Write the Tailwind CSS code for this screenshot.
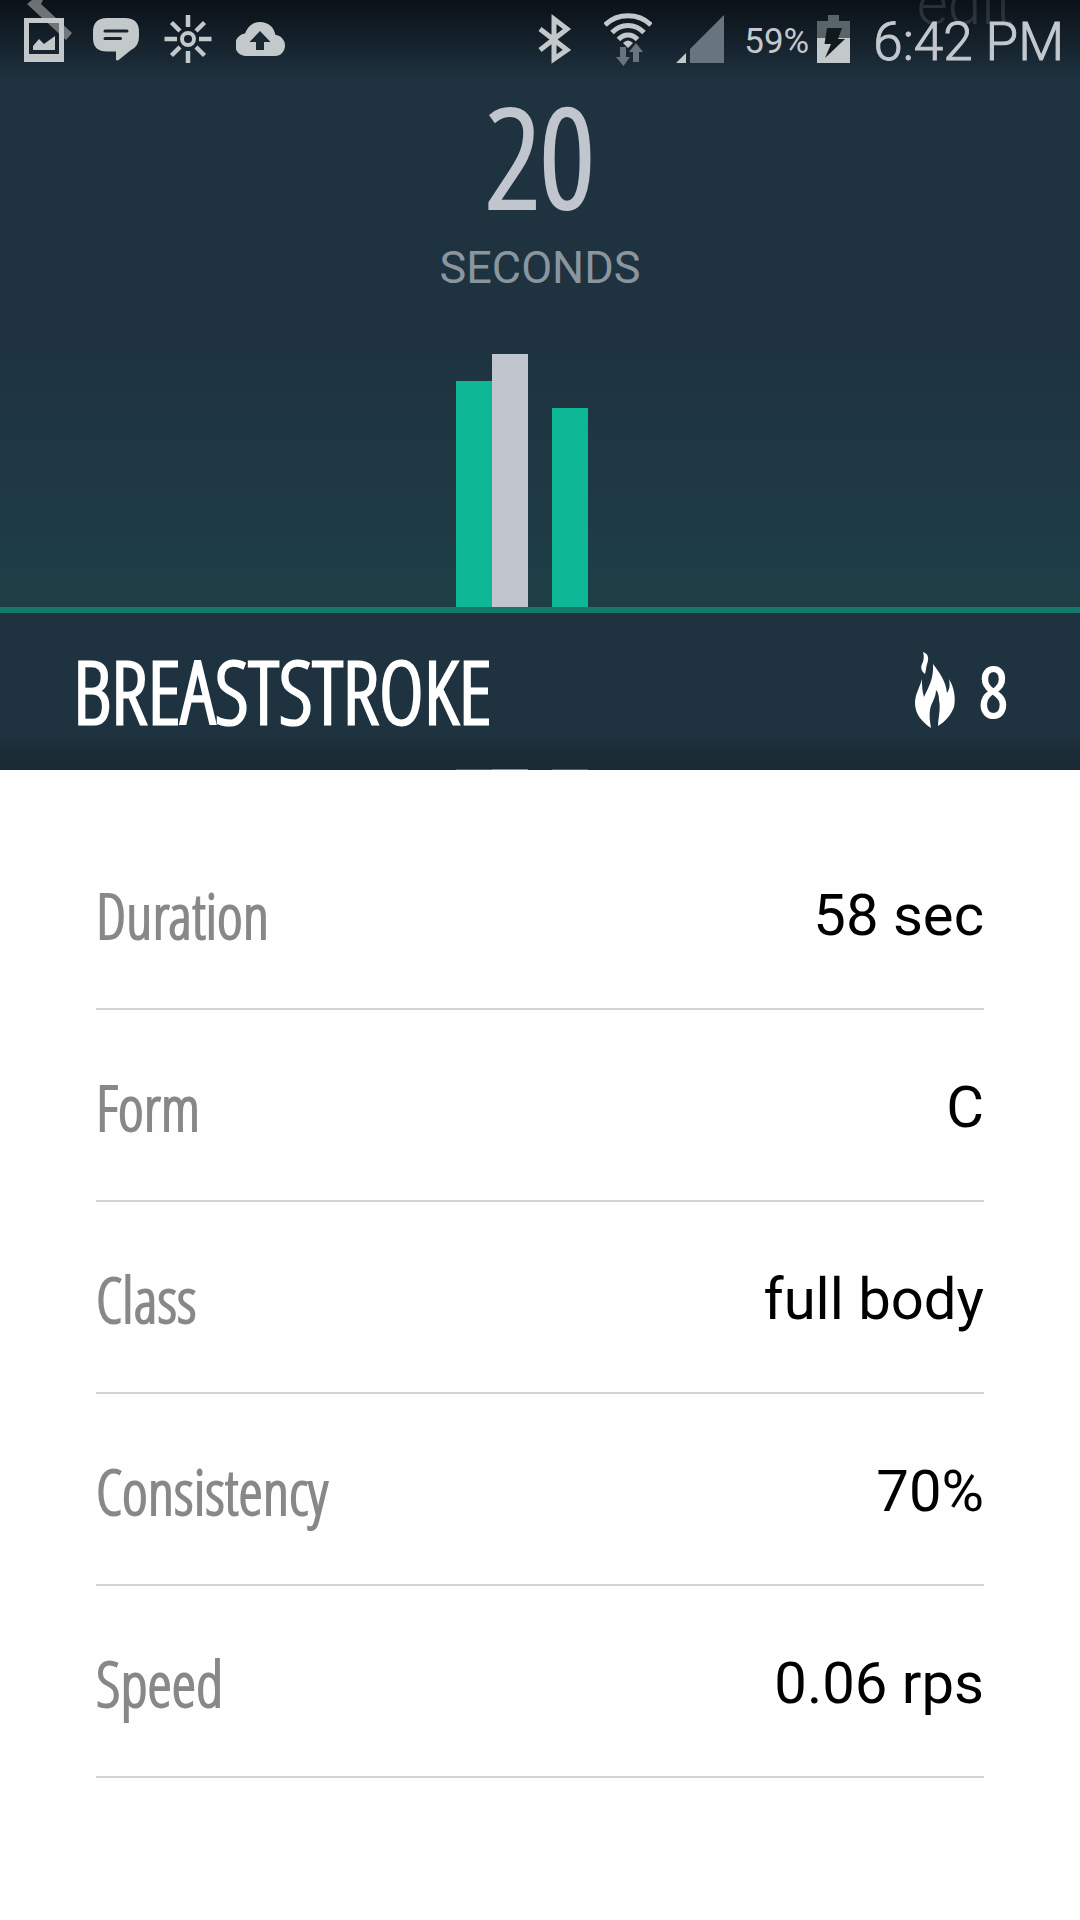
<!DOCTYPE html>
<html lang="en">
<head>
<meta charset="utf-8">
<meta name="viewport" content="width=device-width, initial-scale=1">
<title>Breaststroke</title>
<script src="https://cdn.jsdelivr.net/npm/@tailwindcss/browser@4"></script>
</head>
<body class="min-h-screen bg-[#fefefe] font-['Open_Sans_Condensed_Light','Roboto_Condensed',sans-serif]">
<section class="bg-linear-to-b from-[#1e3240] from-55% to-[#1e3f47]">
  <header class="relative flex h-20 items-center justify-between overflow-hidden bg-linear-to-b from-[#0b1117] to-[#1e3240] pr-4 pl-5 text-[#c3c8ce] font-[Roboto,sans-serif]">
    <a href="#" aria-label="Back" class="absolute top-0 left-0">
      <svg width="80" height="48" viewBox="0 0 80 48"><path d="M32 0 27 4 66 40 72 33 41 4 43 0Z" fill="#fff" fill-opacity=".4"/></svg>
    </a>
    <a href="#" class="absolute -top-9 right-[66px] text-[60px] leading-[80px] font-light text-white/12">edit</a>
    <div class="relative flex items-center gap-6">
      <svg width="48" height="52" viewBox="20 13 48 52" fill="#c3c8ca"><path fill-rule="evenodd" d="M24 17H64V61H24ZM29 22V53H59V22Z"/><path d="M33 49V45L39 38 44 43 55 35V49Z"/></svg>
      <svg width="48" height="52" viewBox="92 14 48 52" fill="#c3c8ca"><path d="M107 18H125Q139 18 139 32V37Q139 46 131 50L118 60.500 116 60V51.500H107Q93 51.500 93 38V32Q93 18 107 18Z"/><path d="M105 31H127M105 38.500H120.500" stroke="#16232d" stroke-width="3" stroke-linecap="round"/></svg>
      <svg width="48" height="52" viewBox="164 14 48 52" fill="none" stroke="#c3c8ca"><circle cx="188" cy="39" r="6" stroke-width="4"/><path stroke-width="4.500" d="M188 15V27M188 51V63M164.500 39H177M199 39H211.500M171.500 22.500 180 31M196 47 204.500 55.500M204.500 22.500 196 31M180 47 171.500 55.500"/></svg>
      <svg width="50" height="52" viewBox="236 14 50 52"><path fill="#c3c8ca" d="M247 56C239 56 235 50 235 45 235 39 240 34 245 33.500 248 26 253 22 260 22 268 22 274 27 275.500 35 281 35.500 285 40 285 45.500 285 51 281 56 275 56Z"/><path fill="#192833" d="M260 31 270.500 42H264V50H256V42H249.500Z"/></svg>
    </div>
    <div class="relative flex items-center">
      <div class="flex items-center gap-6 pr-5">
        <svg width="48" height="54" viewBox="532 12 48 54" fill="none" stroke="#c3c8ca" stroke-width="5"><path d="M540 28 567 49 554 58V18L567 28 540 49"/></svg>
        <svg width="48" height="54" viewBox="605 11 48 54" fill="none"><path stroke="#c3c8ca" stroke-width="5" d="M606 23C618 10.500 640 10.500 652 23M613 30.500C622 21 636 21 645 30.500M619.500 37.500C625 31.500 633 31.500 638.500 37.500"/><path fill="#c3c8ca" d="M624 41Q629 36 634 41L629 46Z"/><path fill="#68757e" d="M621 45H627V55H631L624.500 64 617 55H621ZM634 60V50H630L637 41 644 50H640V60Z"/></svg>
        <svg width="48" height="54" viewBox="677 12 48 54"><path fill="#68757e" d="M725 14V62H691V48Z"/><path fill="#c3c8ca" d="M677 62 687 52V62Z"/></svg>
      </div>
      <span class="pt-1 text-[35px] leading-10">59%</span>
      <svg class="ml-2" width="34" height="52" viewBox="818 12 34 52"><path fill="#596469" d="M829 13H840V19H851V36H818V19H829Z"/><path fill="#c3c8ca" d="M818 36H851V61H818Z"/><path fill="#11191f" d="M828 26H843L839 37H846L826 56 832 42H825.500Z"/></svg>
      <time class="pt-1 pl-[22px] text-[53px] leading-[60px] font-light [-webkit-text-stroke:1px_#c3c8ce]">6:42 PM</time>
    </div>
  </header>

  <div class="flex flex-col items-center pt-4">
    <p class="text-[136px] leading-[120px] text-[#c1c6ce] [-webkit-text-stroke:4px_#c1c6ce]">20</p>
    <p class="pt-[22px] text-[45px] leading-[60px] text-[#8a969e] font-[Roboto,sans-serif]">SECONDS</p>
  </div>

  <div class="flex items-end justify-center gap-6 pt-14" role="img" aria-label="Comparison chart">
    <div class="flex items-end">
      <div class="w-9 bg-[#0eb896]" style="height:226px"></div>
      <div class="w-9 bg-[#c1c6ce]" style="height:253px"></div>
    </div>
    <div class="flex items-end">
      <div class="w-9 bg-[#0eb896]" style="height:199px"></div>
      <div class="w-9 bg-[#c1c6ce]" style="height:0px"></div>
    </div>
  </div>
</section>

<section class="border-t-6 border-[#127a69] bg-linear-to-b from-[#1e3240] from-75% to-[#1a2831] text-white">
  <div class="flex h-[156px] items-center justify-between pr-[73px] pl-[73px]">
    <h1 class="text-[86px] leading-20 [-webkit-text-stroke:3px_white]">BREASTSTROKE</h1>
    <div class="flex items-center gap-6">
      <svg width="42" height="78" viewBox="913 652 42 78" fill="#fff"><path d="M922 652C928 654 928 659 926 664 925 667 925 671 924 674 920 671 919 667 922 662 923 658 923 655 922 652Z"/><path d="M932 664C938 672 945 681 946 693 949 689 949 684 948 679 953 687 955 698 953 707 950 715 944 722 937 726 937 718 940 709 938 700 938 696 937 692 935 690 935 698 930 703 929 710 928 716 929 722 930 728 921 722 914 714 914 703 914 694 919 687 921 679 921 685 921 691 923 697 927 688 933 679 932 664Z"/></svg>
      <span class="text-[68px] leading-20 [-webkit-text-stroke:3px_white]">8</span>
    </div>
  </div>
  <div class="flex h-px justify-center gap-6">
    <div class="flex"><div class="w-9 bg-[#1a7f70]"></div><div class="w-9 bg-[#858c93]"></div></div>
    <div class="flex"><div class="w-9 bg-[#1a7f70]"></div><div class="w-9"></div></div>
  </div>
</section>

<main class="px-24 pt-12">
  <dl>
    <div class="flex h-48 items-center justify-between border-b-2 border-[#d3d3d3] pt-1"><dt class="text-[62px] leading-[70px] text-[#888] [-webkit-text-stroke:2px_#888]">Duration</dt><dd class="text-[58px] leading-[70px] text-black font-[Roboto,sans-serif]">58 sec</dd></div>
    <div class="flex h-48 items-center justify-between border-b-2 border-[#d3d3d3] pt-1"><dt class="text-[62px] leading-[70px] text-[#888] [-webkit-text-stroke:2px_#888]">Form</dt><dd class="text-[58px] leading-[70px] text-black font-[Roboto,sans-serif]">C</dd></div>
    <div class="flex h-48 items-center justify-between border-b-2 border-[#d3d3d3] pt-1"><dt class="text-[62px] leading-[70px] text-[#888] [-webkit-text-stroke:2px_#888]">Class</dt><dd class="text-[58px] leading-[70px] text-black font-[Roboto,sans-serif]">full body</dd></div>
    <div class="flex h-48 items-center justify-between border-b-2 border-[#d3d3d3] pt-1"><dt class="text-[62px] leading-[70px] text-[#888] [-webkit-text-stroke:2px_#888]">Consistency</dt><dd class="text-[58px] leading-[70px] text-black font-[Roboto,sans-serif]">70%</dd></div>
    <div class="flex h-48 items-center justify-between border-b-2 border-[#d3d3d3] pt-1"><dt class="text-[62px] leading-[70px] text-[#888] [-webkit-text-stroke:2px_#888]">Speed</dt><dd class="text-[58px] leading-[70px] text-black font-[Roboto,sans-serif]">0.06 rps</dd></div>
  </dl>
</main>
</body>
</html>
